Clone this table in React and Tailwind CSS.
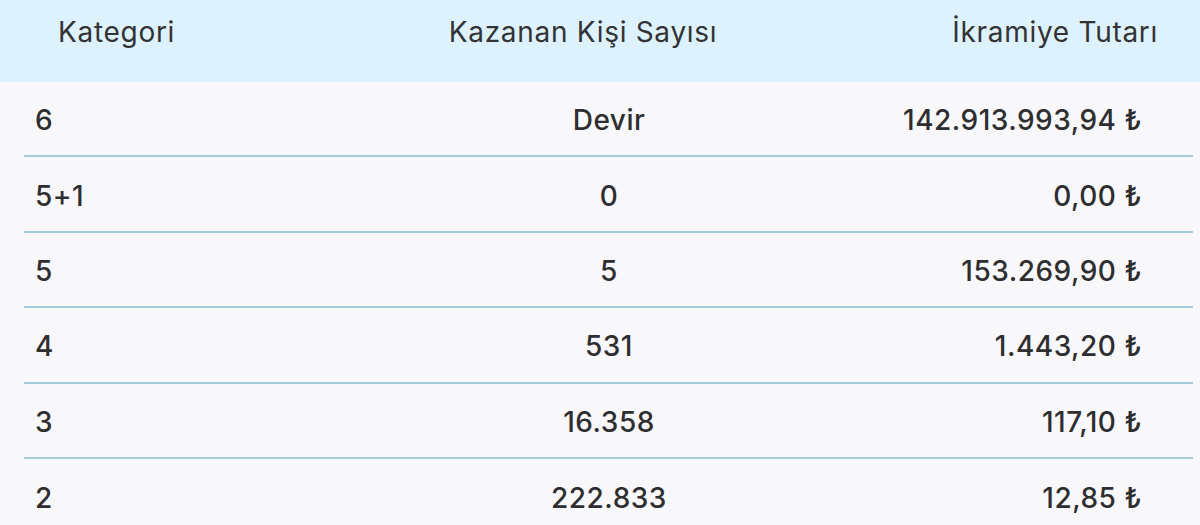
import React from "react";

const rows = [
  { cat: "6", count: "Devir", amount: "142.913.993,94 ₺" },
  { cat: "5+1", count: "0", amount: "0,00 ₺" },
  { cat: "5", count: "5", amount: "153.269,90 ₺" },
  { cat: "4", count: "531", amount: "1.443,20 ₺" },
  { cat: "3", count: "16.358", amount: "117,10 ₺" },
  { cat: "2", count: "222.833", amount: "12,85 ₺" },
];

export default function App() {
  return (
    <div
      className="w-[1200px] h-[525px] overflow-hidden bg-[#f8f8fa] text-[#2e2e30]"
      style={{ fontFamily: "Inter, 'Noto Sans', sans-serif" }}
    >
      <div className="h-[82px] bg-[#ddf2fc] flex items-start pt-[14px] text-[28px] leading-[36px] font-normal tracking-[0.7px] text-[#333336]">
        <div className="w-[400px] pl-[58px]">Kategori</div>
        <div className="w-[366px] text-center">Kazanan Kişi Sayısı</div>
        <div className="flex-1 text-right pr-[42px]">İkramiye Tutarı</div>
      </div>
      <div className="pl-[24px] pr-[7px]">
        {rows.map((r, i) => (
          <div
            key={i}
            className={
              "h-[75.4px] flex items-center text-[28px] font-medium tracking-[0.5px] " +
              (i < rows.length - 1 ? "border-b-2 border-[#a6ccd6]" : "")
            }
          >
            <div className="w-[400px] pl-[11px] pt-[3px]">{r.cat}</div>
            <div className="w-[370px] text-center pt-[3px]">{r.count}</div>
            <div className="flex-1 text-right pr-[51px] pt-[3px]">{r.amount}</div>
          </div>
        ))}
      </div>
    </div>
  );
}
